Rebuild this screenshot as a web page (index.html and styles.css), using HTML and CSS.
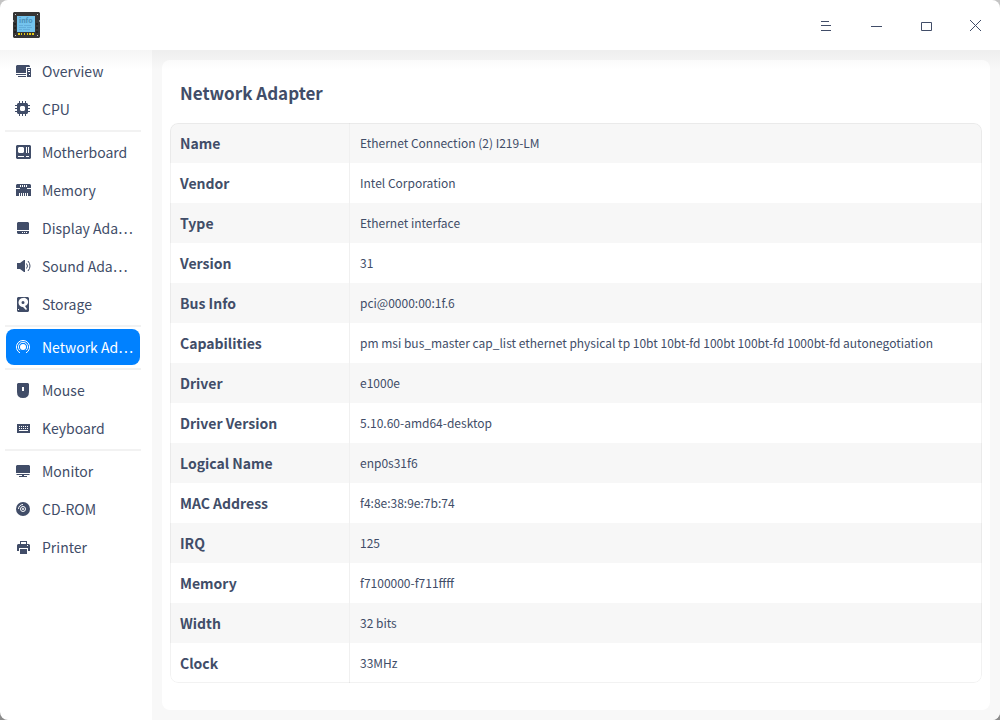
FILE: index.html
```
<!DOCTYPE html>
<html lang="en">
<head>
    <meta charset="UTF-8">
    <meta name="viewport" content="width=device-width, initial-scale=1.0">
    <title>Device Info</title>
    <link rel="stylesheet" href="styles.css">
</head>
<body>
    <div class="window">
        <header class="titlebar">
            <svg class="logo" viewBox="0 0 28 28">
                <path fill="#363636" d="M2 1h25l1 1v7l-1 1 1 1v15l-1 1H2l-1-1V11l1-1-1-1V2z"/>
                <path fill="#222" d="M2 12h2v2H2zM2 16h2v2H2zM2 20h2v2H2zM24 12h2v2h-2zM24 16h2v2h-2zM24 20h2v2h-2z"/>
                <path fill="#ccc" d="M3 3h1v1H3zM25 3h1v1h-1zM3 24h1v1H3zM25 24h1v1h-1z"/>
                <path fill="#74c4ee" d="M5 5h18v16H5z"/>
                <path fill="#e6cc14" d="M6 22h2v2H6zM9 22h1v2H9zM12 22h1v2h-1zM15 22h1v2h-1zM17 22h2v2h-2zM20 22h2v2h-2z"/>
                <path fill="#62addb" d="M7 14h4v1H7zM12 14h7v1h-7zM7 16h7v1H7zM15 16h5v1h-5zM7 18h3v1H7zM11 18h7v1h-7z"/>
                <text x="7" y="12" class="logo-text">info</text>
            </svg>
            <div class="controls">
                <button aria-label="Menu"><svg viewBox="0 0 14 14"><path d="M3 3.500h8M3 7.500h10M3 12.500h10"/></svg></button>
                <button aria-label="Minimize"><svg viewBox="0 0 14 14"><path d="M3 8.500h11"/></svg></button>
                <button aria-label="Maximize"><svg viewBox="0 0 14 14"><path d="M3.500 4.500h10v8h-10z"/></svg></button>
                <button aria-label="Close"><svg viewBox="0 0 14 14"><path d="M2 2l11 11M13 2L2 13"/></svg></button>
            </div>
        </header>

        <div class="main">
            <nav class="sidebar">
                <a href="#overview">
                    <svg viewBox="0 0 16 16"><path d="M2 2h12l1 1v1h-4v6H1V3zM1 11h10v1H1zM3 13h8v1H3z"/><path fill-rule="evenodd" d="M12 5h4v9h-4zM13 6v1h2V6zM13 8v1h2V8zM14 11v1h1v-1z"/></svg>
                    <span>Overview</span>
                </a>
                <a href="#cpu">
                    <svg viewBox="0 0 16 16"><path fill-rule="evenodd" d="M3 2h9l1 1v9l-1 1H3l-1-1V3zM6 5L5 6v3l1 1h3l1-1V6L9 5z"/><path d="M4 0h1v2H4zM7 0h1v2H7zM10 0h1v2h-1zM4 13h1v2H4zM7 13h1v2H7zM10 13h1v2h-1zM0 4h2v1H0zM0 7h2v1H0zM0 10h2v1H0zM13 4h2v1h-2zM13 7h2v1h-2zM13 10h2v1h-2z"/></svg>
                    <span>CPU</span>
                </a>
                <hr>
                <a href="#motherboard">
                    <svg viewBox="0 0 16 16"><path fill-rule="evenodd" d="M2 1h13l1 1v12l-1 1H2l-1-1V2zM4 3L3 4v4l1 1h4l1-1V4L8 3zM11 3v6h1V3zM13 3v6h1V3zM3 12v1h6v-1zM11 12v1h3v-1z"/></svg>
                    <span>Motherboard</span>
                </a>
                <a href="#memory">
                    <svg viewBox="0 0 16 16"><path fill-rule="evenodd" d="M2 2h13l1 1v3h-4v1h4v7H1V7h4V6H1V3zM5 3v2h1V3zM7 3v2h1V3zM9 3v2h1V3zM11 3v2h1V3zM4 11v3h1v-3zM6 11v3h1v-3zM8 11v3h1v-3zM10 11v3h1v-3zM12 11v3h1v-3z"/></svg>
                    <span>Memory</span>
                </a>
                <a href="#display" title="Display Adapter">
                    <svg viewBox="0 0 16 16"><path fill-rule="evenodd" d="M3 2h10l1 1v7H2V3zM2 11h12v2l-1 1H3l-1-1zM7 12v1h1v-1zM9 12v1h1v-1zM11 12v1h1v-1z"/></svg>
                    <span>Display Ada…</span>
                </a>
                <a href="#sound" title="Sound Adapter">
                    <svg viewBox="0 0 16 16"><path d="M2 5h3l4-3h1v12H9l-4-3H2z"/><path class="line" d="M11.500 5.500q2 2.500 0 5M13 3q4 5 0 10"/></svg>
                    <span>Sound Ada…</span>
                </a>
                <a href="#storage">
                    <svg viewBox="0 0 16 16"><path fill-rule="evenodd" d="M3 1h10l1 1v13l-1 1H3l-1-1V2zM8 2a4 4 0 1 0 0 9l3 3 1-1-2-3a4 4 0 0 0-2-8zM8 5a1.500 1.500 0 1 1 0 3 1.500 1.500 0 0 1 0-3zM3 13v1h1v-1z"/></svg>
                    <span>Storage</span>
                </a>
                <hr>
                <a href="#network" class="active" title="Network Adapter">
                    <svg viewBox="0 0 16 16"><circle cx="8" cy="8" r="3"/><path class="line" d="M5 13.900a6.600 6.600 0 1 1 6 0M4.800 11.200a4.600 4.600 0 1 1 6.400 0"/></svg>
                    <span>Network Ad…</span>
                </a>
                <hr>
                <a href="#mouse">
                    <svg viewBox="0 0 16 16"><path fill-rule="evenodd" d="M3 1h10l1 1v8q0 6-6 6t-6-6V2zM7 5v4h2V5z"/></svg>
                    <span>Mouse</span>
                </a>
                <a href="#keyboard">
                    <svg viewBox="0 0 16 16"><path fill-rule="evenodd" d="M2 4h13v9H2zM4 6v1h1V6zM6 6v1h1V6zM8 6v1h1V6zM10 6v1h1V6zM12 6v1h1V6zM4 8v1h1V8zM6 8v1h1V8zM8 8v1h1V8zM10 8v1h1V8zM12 8v1h1V8zM4 10v1h9v-1z"/></svg>
                    <span>Keyboard</span>
                </a>
                <hr>
                <a href="#monitor">
                    <svg viewBox="0 0 16 16"><path d="M2 2h12l1 1v7H1V3zM1 11h14l-1 1H2zM7 12h2v1h3v1H4v-1h3z"/></svg>
                    <span>Monitor</span>
                </a>
                <a href="#cdrom">
                    <svg viewBox="0 0 16 16"><circle cx="8" cy="8" r="7"/><circle class="ring" cx="8" cy="8" r="2.500"/><circle class="hole" cx="8" cy="8" r="1"/><path class="ring" d="M3.500 8A4.500 4.500 0 0 1 8 3.500"/></svg>
                    <span>CD-ROM</span>
                </a>
                <a href="#printer">
                    <svg viewBox="0 0 16 16"><path fill-rule="evenodd" d="M5 2h7v3h-1V3H6v2H5zM3 5h11l1 1v6h-2V9H4v3H2V6zM12 6v1h1V6zM5 10h7v5H5z"/></svg>
                    <span>Printer</span>
                </a>
            </nav>

            <main class="content">
                <section class="card">
                    <h1>Network Adapter</h1>
                    <div class="table-wrap">
                        <table>
                            <tr><th scope="row">Name</th><td>Ethernet Connection (2) I219-LM</td></tr>
                            <tr><th scope="row">Vendor</th><td>Intel Corporation</td></tr>
                            <tr><th scope="row">Type</th><td>Ethernet interface</td></tr>
                            <tr><th scope="row">Version</th><td>31</td></tr>
                            <tr><th scope="row">Bus Info</th><td>pci@0000:00:1f.6</td></tr>
                            <tr><th scope="row">Capabilities</th><td>pm msi bus_master cap_list ethernet physical tp 10bt 10bt-fd 100bt 100bt-fd 1000bt-fd autonegotiation</td></tr>
                            <tr><th scope="row">Driver</th><td>e1000e</td></tr>
                            <tr><th scope="row">Driver Version</th><td>5.10.60-amd64-desktop</td></tr>
                            <tr><th scope="row">Logical Name</th><td>enp0s31f6</td></tr>
                            <tr><th scope="row">MAC Address</th><td>f4:8e:38:9e:7b:74</td></tr>
                            <tr><th scope="row">IRQ</th><td>125</td></tr>
                            <tr><th scope="row">Memory</th><td>f7100000-f711ffff</td></tr>
                            <tr><th scope="row">Width</th><td>32 bits</td></tr>
                            <tr><th scope="row">Clock</th><td>33MHz</td></tr>
                        </table>
                    </div>
                </section>
            </main>
        </div>
    </div>
</body>
</html>
```
FILE: styles.css
```
* {
    box-sizing: border-box;
}

body {
    margin: 0;
    font-family: "Noto Sans CJK SC", "Noto Sans", sans-serif;
    color: #414d68;
    background: linear-gradient(#c4c4c4, #8c8c8c);
}

.window {
    display: flex;
    flex-direction: column;
    min-height: 100vh;
    background: #fff;
    border-radius: 8px;
    overflow: hidden;
}

.titlebar {
    position: relative;
    display: flex;
    align-items: center;
    justify-content: space-between;
    height: 50px;
    padding-left: 12px;
}

/* soft shadow below the title bar */
.titlebar::after {
    content: "";
    position: absolute;
    top: 100%;
    left: 0;
    right: 0;
    height: 20px;
    background: linear-gradient(rgba(0, 0, 0, 0.04), rgba(0, 0, 0, 0));
    pointer-events: none;
}

.logo {
    width: 28px;
    height: 28px;
}

.logo-text {
    font-size: 7px;
    font-weight: bold;
    fill: #4a8fb8;
}

.controls {
    display: flex;
}

.controls button {
    display: flex;
    align-items: center;
    justify-content: center;
    width: 50px;
    height: 50px;
    padding: 0;
    border: none;
    background: none;
}

.controls svg {
    width: 14px;
    height: 14px;
    fill: none;
    stroke: #414d68;
}

.main {
    display: flex;
    flex: 1;
}

.sidebar {
    display: flex;
    flex-direction: column;
    gap: 2px;
    flex: none;
    width: 152px;
    padding: 3px 12px 10px 6px;
}

.sidebar a {
    display: flex;
    align-items: center;
    gap: 11px;
    height: 36px;
    padding-left: 9px;
    border-radius: 8px;
    font-size: 14px;
    line-height: 20px;
    white-space: nowrap;
    color: inherit;
    text-decoration: none;
}

.sidebar svg {
    flex: none;
    width: 16px;
    height: 16px;
    fill: currentColor;
}

.sidebar .line {
    fill: none;
    stroke: currentColor;
}

.sidebar .ring {
    fill: none;
    stroke: #fff;
}

.sidebar .hole {
    fill: #fff;
}

.sidebar .active {
    color: #fff;
    background: #0081ff;
}

.sidebar hr {
    width: 136px;
    height: 2px;
    margin: 1px -1px 0;
    border: none;
    background: #f2f2f2;
}

.content {
    display: flex;
    flex: 1;
    min-width: 0;
    padding: 10px;
    background: #f8f8f8;
}

.card {
    flex: 1;
    min-width: 0;
    padding: 18px 8px 27px;
    background: #fff;
    border-radius: 8px;
}

h1 {
    margin: 0 10px 15px;
    font-size: 17px;
    line-height: 30px;
    font-weight: bold;
}

.table-wrap {
    position: relative;
    border-radius: 8px;
    overflow: hidden;
}

.table-wrap::after {
    content: "";
    position: absolute;
    inset: 0;
    border: 1px solid rgba(0, 0, 0, 0.05);
    border-radius: 8px;
    pointer-events: none;
}

table {
    width: 100%;
    border-spacing: 0;
}

th,
td {
    height: 40px;
    padding: 0 10px;
    line-height: 20px;
    text-align: left;
}

th {
    width: 180px;
    font-size: 14px;
    font-weight: bold;
    border-right: 1px solid #f0f0f0;
}

td {
    font-size: 12px;
}

tr:nth-child(odd) {
    background: #f7f7f7;
}
```
